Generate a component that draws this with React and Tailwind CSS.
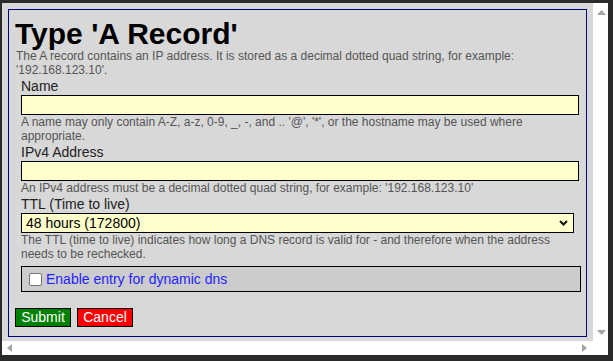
import { useState } from "react";

const ArrowUp = () => (
  <svg width="9" height="5" viewBox="0 0 9 5">
    <polygon points="4.5,0 9,5 0,5" fill="#a3a3a3" />
  </svg>
);

const ArrowDown = () => (
  <svg width="9" height="5" viewBox="0 0 9 5">
    <polygon points="0,0 9,0 4.5,5" fill="#a3a3a3" />
  </svg>
);

const ArrowLeft = () => (
  <svg width="5" height="8" viewBox="0 0 5 8">
    <polygon points="5,0 5,8 0,4" fill="#a3a3a3" />
  </svg>
);

const ArrowRight = () => (
  <svg width="5" height="8" viewBox="0 0 5 8">
    <polygon points="0,0 5,4 0,8" fill="#a3a3a3" />
  </svg>
);

const Label = ({ children }) => (
  <div className="text-[14px] leading-[18px] text-[#222]">{children}</div>
);

const Help = ({ children }) => (
  <div className="w-[558px] text-[12px] leading-[14px] text-[#555]">
    {children}
  </div>
);

const App = () => {
  const [name, setName] = useState("");
  const [ip, setIp] = useState("");
  const [ttl, setTtl] = useState("172800");
  const [dyn, setDyn] = useState(false);

  return (
    <div
      className="w-[613px] h-[361px] bg-[#2b2b2b] pl-[2px] pt-[3px] overflow-hidden"
      style={{ fontFamily: '"Liberation Sans", Arial, sans-serif' }}
    >
      <div className="w-[606px] h-[352px] flex flex-col">
        <div className="flex h-[338px]">
          {/* dialog content */}
          <div className="w-[591px] bg-[#d8d8d8] px-[6px] pt-[6px]">
            <div className="h-[328px] border border-[#000080] pl-[6px] pt-[9px]">
              <h1 className="text-[30px] leading-[30px] font-bold text-black">
                Type 'A Record'
              </h1>
              <p className="text-[12px] leading-[14px] text-[#555] pl-px">
                The A record contains an IP address. It is stored as a decimal
                dotted quad string, for example: '192.168.123.10'.
              </p>

              <div className="ml-[6px]">
                <Label>Name</Label>
                <input
                  value={name}
                  onChange={(e) => setName(e.target.value)}
                  className="block w-[558px] h-[20px] bg-[#ffffcc] border border-black outline-none px-1 text-[14px]"
                />
                <Help>
                  A name may only contain A-Z, a-z, 0-9, _, -, and .. '@', '*',
                  or the hostname may be used where appropriate.
                </Help>

                <Label>IPv4 Address</Label>
                <input
                  value={ip}
                  onChange={(e) => setIp(e.target.value)}
                  className="block w-[558px] h-[20px] bg-[#ffffcc] border border-black outline-none px-1 text-[14px]"
                />
                <Help>
                  An IPv4 address must be a decimal dotted quad string, for
                  example: '192.168.123.10'
                </Help>

                <Label>TTL (Time to live)</Label>
                <div className="relative w-[553px] h-[20px]">
                  <select
                    value={ttl}
                    onChange={(e) => setTtl(e.target.value)}
                    className="appearance-none block w-full h-full bg-[#ffffcc] border border-black outline-none pl-[4px] text-[14px] leading-[18px] text-black"
                  >
                    <option value="3600">1 hour (3600)</option>
                    <option value="86400">24 hours (86400)</option>
                    <option value="172800">48 hours (172800)</option>
                  </select>
                  <svg
                    className="absolute right-[6px] top-[7px] pointer-events-none"
                    width="9"
                    height="6"
                    viewBox="0 0 9 6"
                  >
                    <polyline
                      points="1,1 4.5,4.5 8,1"
                      fill="none"
                      stroke="#111"
                      strokeWidth="2"
                    />
                  </svg>
                </div>
                <Help>
                  The TTL (time to live) indicates how long a DNS record is
                  valid for - and therefore when the address needs to be
                  rechecked.
                </Help>

                <label className="mt-[5px] w-[560px] h-[26px] flex items-center gap-[4px] bg-[#cccccc] border border-black pl-[7px]">
                  <input
                    type="checkbox"
                    checked={dyn}
                    onChange={(e) => setDyn(e.target.checked)}
                    className="appearance-none w-[13px] h-[13px] bg-white border border-[#767676] rounded-[2px] checked:bg-[#0075ff]"
                  />
                  <span className="text-[14px] text-[#1f1fff]">
                    Enable entry for dynamic dns
                  </span>
                </label>
              </div>

              <div className="flex gap-[6px] mt-[16px]">
                <button className="h-[19px] w-[56px] bg-[#008000] border border-black text-white text-[14px] leading-[17px]">
                  Submit
                </button>
                <button className="h-[19px] w-[56px] bg-[#ff0000] border border-black text-white text-[14px] leading-[17px]">
                  Cancel
                </button>
              </div>
            </div>
          </div>

          {/* vertical scrollbar */}
          <div className="w-[15px] bg-white flex flex-col items-center justify-between pt-[7px] pb-[6px] pl-[1px]">
            <ArrowUp />
            <ArrowDown />
          </div>
        </div>

        {/* horizontal scrollbar */}
        <div className="flex h-[14px] bg-white">
          <div className="w-[591px] flex items-center justify-between pl-[5px] pr-[6px]">
            <ArrowLeft />
            <ArrowRight />
          </div>
          <div className="w-[15px]" />
        </div>
      </div>
    </div>
  );
};

export default App;
